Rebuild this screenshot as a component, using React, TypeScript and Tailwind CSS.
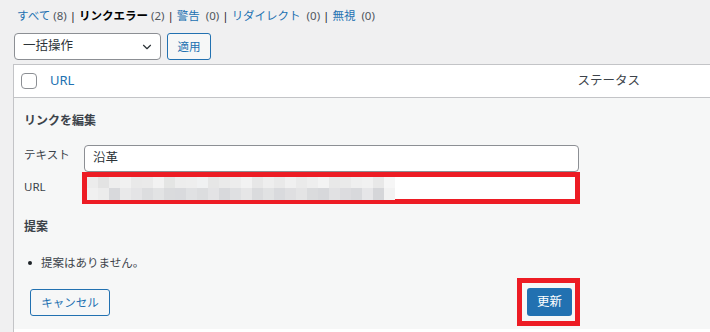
import React from "react";
import { ChevronDown } from "lucide-react";

const top = ['#ececec','#e3e3e3','#eeeeee','#f1f1f1','#e9e9e9','#eaeaea','#f2f2f2','#e4e5e4','#ededed','#eeeeee','#f0f1f2','#e6e6e6','#eaeaea','#ededed','#f2f2f2','#e7e7e7','#eeeeee','#e9e9e9','#f0f0f0','#eaeaea','#eeeeee','#f3f3f3','#e8e8e8','#eaeaea','#efefef','#f1f1f1','#e8e8e8','#f6f6f6'];
const bottom = ['#f0f0f0','#ececec','#d8d9dc','#e9e9ea','#e4e4e6','#dcdddf','#e2e3e4','#dadbdd','#d9dadd','#e0e1e3','#dcdddf','#e3e3e5','#d8d9dc','#dfe0e2','#e6e6e7','#dadbdd','#e1e2e3','#d9dadd','#dfdfe1','#e4e4e5','#dadbdd','#d7d8db','#e1e1e3','#dcdcdf','#d8d9dc','#e6e6e8','#d5d6d9','#f2f2f2'];

function Mosaic() {
  return (
    <div className="flex flex-col">
      <div className="flex h-[11px]">
        {top.map((c, i) => (
          <div key={i} className="w-[11px] h-full" style={{ backgroundColor: c }} />
        ))}
      </div>
      <div className="flex h-[12px]">
        {bottom.map((c, i) => (
          <div key={i} className="w-[11px] h-full" style={{ backgroundColor: c }} />
        ))}
      </div>
    </div>
  );
}

export default function App() {
  return (
    <div className="w-[710px] h-[332px] overflow-hidden bg-[#f0f0f1] font-['Noto_Sans','Noto_Sans_CJK_JP',sans-serif] text-[#3c434a]">
      {/* filters */}
      <div className="pt-[7px] pl-[17px] h-[25px] leading-[18px] text-[11.5px] flex items-center whitespace-pre">
        <span className="text-[#2271b1]">すべて</span>
        <span className="text-[#50575e]"> (8) </span>
        <span className="text-[#1d2327]">| </span>
        <span className="font-bold text-[#000]">リンクエラー</span>
        <span className="text-[#50575e]"> (2) </span>
        <span className="text-[#1d2327]">| </span>
        <span className="text-[#2271b1]">警告</span>
        <span className="text-[#50575e]">  (0) </span>
        <span className="text-[#1d2327]">| </span>
        <span className="text-[#2271b1]">リダイレクト</span>
        <span className="text-[#50575e]">  (0) </span>
        <span className="text-[#1d2327]">| </span>
        <span className="text-[#2271b1]">無視</span>
        <span className="text-[#50575e]">  (0)</span>
      </div>

      {/* bulk actions */}
      <div className="mt-[8px] pl-[14px] flex items-stretch gap-[6px] h-[27px]">
        <div className="w-[147px] bg-white border border-[#8c8f94] rounded-[4px] flex items-center justify-between pl-[8px] pr-[6px] text-[12.5px] text-[#2c3338]">
          <span>一括操作</span>
          <ChevronDown size={14} strokeWidth={2} className="text-[#2c3338]" />
        </div>
        <div className="w-[44px] bg-[#f6f7f7] border border-[#2271b1] rounded-[3px] flex items-center justify-center text-[11.5px] text-[#2271b1]">
          適用
        </div>
      </div>

      {/* table */}
      <div className="mt-[4px] ml-[13px] w-[720px] border-l border-t border-[#c3c4c7]">
        <div className="h-[33px] bg-white border-b border-[#c3c4c7] flex items-center">
          <div className="ml-[7px] w-[16px] h-[16px] bg-white border border-[#8c8f94] rounded-[4px]" />
          <span className="ml-[13px] text-[13px] text-[#2271b1]">URL</span>
          <span className="ml-[503px] text-[12.5px] text-[#3c434a]">ステータス</span>
        </div>

        <div className="bg-[#f6f7f7] pl-[10px] pt-[13px] pb-[3px]">
          <div className="leading-[20px] text-[12px] font-bold text-[#3c434a]">リンクを編集</div>

          <div className="mt-[14px] flex items-start">
            <div className="w-[60px] leading-[20px] text-[11.5px] text-[#3c434a]">テキスト</div>
            <div className="w-[495px] h-[27px] bg-white border border-[#8c8f94] rounded-[4px] flex items-center pl-[8px] text-[12.5px] text-[#2c3338]">
              沿革
            </div>
          </div>

          <div className="flex items-start">
            <div className="w-[58px] mt-[5px] leading-[20px] text-[11.5px] text-[#3c434a]">URL</div>
            <div className="w-[498px] h-[32px] bg-white border-[5px] border-[#ed1c24] flex items-center">
              <Mosaic />
            </div>
          </div>

          <div className="mt-[13px] leading-[20px] text-[12px] font-bold text-[#3c434a]">提案</div>

          <div className="mt-[16px] flex items-center h-[20px]">
            <div className="ml-[4px] w-[4px] h-[4px] rounded-full bg-[#1d2327]" />
            <span className="ml-[9px] text-[11.5px] text-[#3c434a]">提案はありません。</span>
          </div>

          <div className="mt-[5px] flex items-start">
            <div className="ml-[6px] mt-[11px] w-[80px] h-[27px] bg-[#f6f7f7] border border-[#2271b1] rounded-[3px] flex items-center justify-center text-[11.5px] text-[#2271b1]">
              キャンセル
            </div>
            <div className="ml-[407px] border-[5px] border-[#ed1c24] pl-[5px] pr-[3px] pt-[5px] pb-[5px]">
              <div className="w-[45px] h-[28px] bg-[#2271b1] rounded-[3px] flex items-center justify-center text-[12.5px] text-white">
                更新
              </div>
            </div>
          </div>
        </div>
        <div className="h-[10px] bg-white" />
      </div>
    </div>
  );
}
